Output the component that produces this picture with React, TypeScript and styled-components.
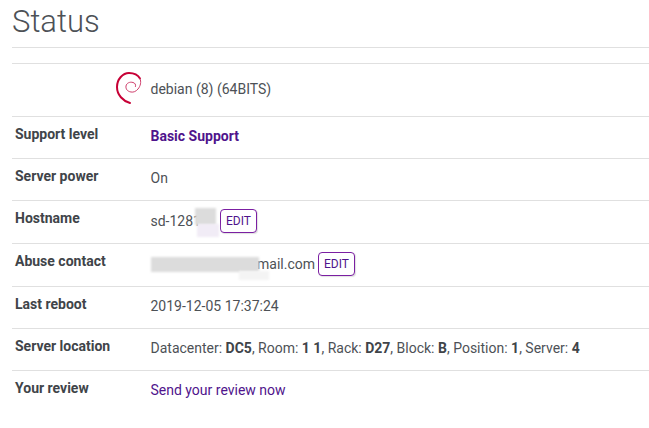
import React from 'react'
import styled, { createGlobalStyle } from 'styled-components'

const GlobalStyle = createGlobalStyle`
  html, body {
    margin: 0;
    padding: 0;
    background: #fff;
    overflow: hidden;
  }
  body {
    font-family: Roboto, "Liberation Sans", sans-serif;
    color: #4d5156;
  }
`

const Page = styled.div`
  width: 649px;
  height: 428px;
  padding-left: 12px;
  box-sizing: border-box;
`

const Title = styled.h1`
  margin: 0;
  height: 48px;
  box-sizing: border-box;
  border-bottom: 1px solid #e0e0e0;
  font-size: 31px;
  font-weight: 300;
  line-height: 44px;
  color: #4d5156;
`

const Table = styled.div`
  margin-top: 15px;
  border-top: 1px solid #e0e0e0;
`

const Row = styled.div<{ $height?: number }>`
  display: grid;
  grid-template-columns: 100px 38.5px 1fr;
  height: ${(p) => p.$height ?? 42}px;
  box-sizing: border-box;
  border-bottom: 1px solid #e0e0e0;

  &:last-child {
    border-bottom: none;
  }
`

const Label = styled.div`
  grid-column: 1 / 3;
  padding: 8px 0 0 3px;
  font-size: 14px;
  font-weight: 700;
  line-height: 18px;
  color: #404449;
`

const LogoCell = styled.div`
  grid-column: 2;
  display: flex;
  align-items: center;
  padding: 0 0 4px 3px;
`

const Value = styled.div<{ $lift?: number }>`
  grid-column: 3;
  display: flex;
  align-items: center;
  padding-bottom: ${(p) => p.$lift ?? 4}px;
  box-sizing: border-box;
  font-size: 14px;
  line-height: 18px;
  white-space: pre;

  b {
    font-weight: 700;
    color: #404449;
  }
`

const Link = styled.a<{ $bold?: boolean }>`
  color: #4f148c;
  font-weight: ${(p) => (p.$bold ? 700 : 400)};
  text-decoration: none;
`

const EditButton = styled.button`
  flex: none;
  width: 37px;
  height: 24px;
  padding: 0;
  border: 1px solid #7b1fa2;
  border-radius: 4px;
  background: #fff;
  color: #4f148c;
  font: 400 12px Roboto, "Liberation Sans", sans-serif;
  box-shadow: 1px 1px 1px rgba(0, 0, 0, 0.12);
`

const Masked = styled.span<{ $width: number; $indent?: number }>`
  position: relative;
  display: inline-block;
  width: ${(p) => p.$width}px;
  padding-left: ${(p) => p.$indent ?? 0}px;
  box-sizing: border-box;
`

const Smudge = styled.span<{
  $width: number
  $height: number
  $left: number
  $top: number
  $color?: string
}>`
  position: absolute;
  left: ${(p) => p.$left}px;
  top: ${(p) => p.$top}px;
  width: ${(p) => p.$width}px;
  height: ${(p) => p.$height}px;
  background: ${(p) => p.$color ?? '#dcdcdc'};
  filter: blur(1px);
`

const DebianSwirl = () => (
  <svg width="28" height="34" viewBox="0 0 28 34" fill="none">
    <path
      d="M15 32 C8 30 2 24 2 16 C2 8 8 2 14 2 C19 2 23 4 25 7.5"
      stroke="#c70036"
      strokeWidth="2"
      strokeLinecap="round"
    />
    <path
      d="M25 7.5 C26.5 11 25.5 15 23 18 C21 20.4 18.5 21.5 16 21 C12.5 20.5 10.5 18 11 15 C11.5 12 15 10.5 18 11.5 C20 12 21 13.5 20.5 15.5"
      stroke="#cf3f6c"
      strokeWidth="1"
      strokeLinecap="round"
    />
  </svg>
)

export default function App() {
  return (
    <Page>
      <GlobalStyle />
      <Title>Status</Title>
      <Table>
        <Row $height={53}>
          <LogoCell>
            <DebianSwirl />
          </LogoCell>
          <Value $lift={2}>debian (8) (64BITS)</Value>
        </Row>
        <Row>
          <Label>Support level</Label>
          <Value>
            <Link $bold>Basic Support</Link>
          </Value>
        </Row>
        <Row>
          <Label>Server power</Label>
          <Value>On</Value>
        </Row>
        <Row $height={43}>
          <Label>Hostname</Label>
          <Value $lift={2}>
            <Masked $width={69.5}>
              sd-1281
              <Smudge $width={21} $height={17} $left={44} $top={-4} />
              <Smudge $width={22} $height={13} $left={46} $top={12} $color="#f1ecf6" />
            </Masked>
            <EditButton>EDIT</EditButton>
          </Value>
        </Row>
        <Row $height={43}>
          <Label>Abuse contact</Label>
          <Value $lift={2}>
            <Masked $width={167.5} $indent={106.5}>
              mail.com
              <Smudge $width={108} $height={15} $left={0} $top={2} />
              <Smudge $width={30} $height={9} $left={88} $top={16} $color="#f4f4f4" />
            </Masked>
            <EditButton>EDIT</EditButton>
          </Value>
        </Row>
        <Row>
          <Label>Last reboot</Label>
          <Value>2019-12-05 17:37:24</Value>
        </Row>
        <Row>
          <Label>Server location</Label>
          <Value>
            <span>
              Datacenter: <b>DC5</b>, Room: <b>1 1</b>, Rack: <b>D27</b>, Block: <b>B</b>, Position: <b>1</b>, Server: <b>4</b>
            </span>
          </Value>
        </Row>
        <Row>
          <Label>Your review</Label>
          <Value>
            <Link>Send your review now</Link>
          </Value>
        </Row>
      </Table>
    </Page>
  )
}
